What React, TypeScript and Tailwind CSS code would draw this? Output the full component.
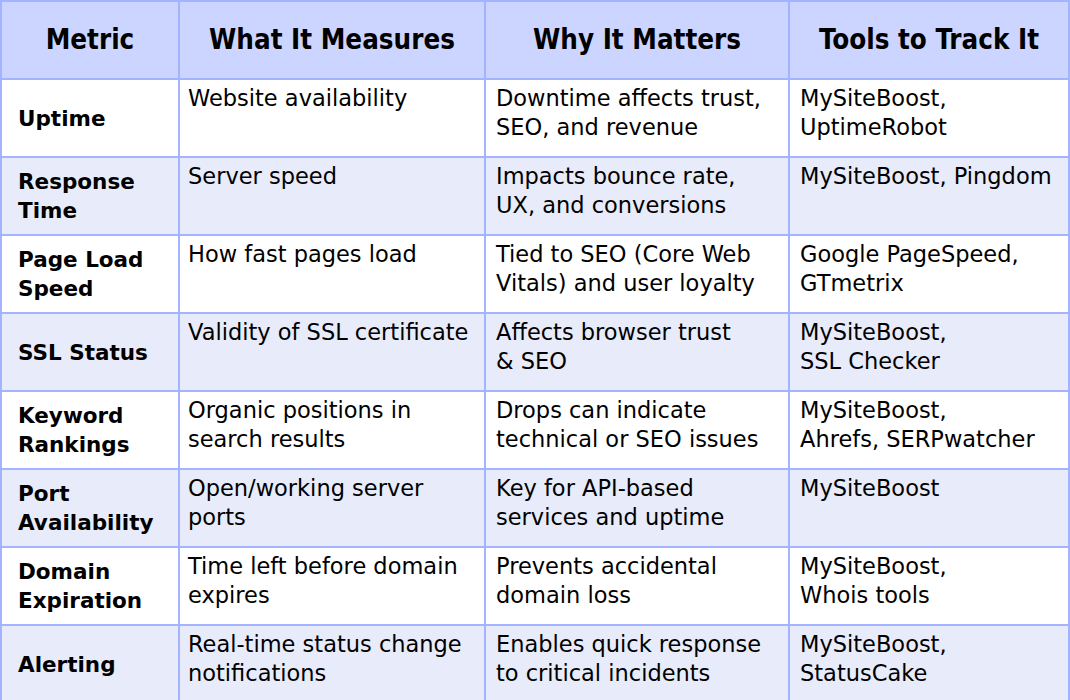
const rows = [
  { metric: ['Uptime'], measures: ['Website availability'], why: ['Downtime affects trust,', 'SEO, and revenue'], tools: ['MySiteBoost,', 'UptimeRobot'] },
  { metric: ['Response', 'Time'], measures: ['Server speed'], why: ['Impacts bounce rate,', 'UX, and conversions'], tools: ['MySiteBoost, Pingdom'] },
  { metric: ['Page Load', 'Speed'], measures: ['How fast pages load'], why: ['Tied to SEO (Core Web', 'Vitals) and user loyalty'], tools: ['Google PageSpeed,', 'GTmetrix'] },
  { metric: ['SSL Status'], measures: ['Validity of SSL certificate'], why: ['Affects browser trust', '& SEO'], tools: ['MySiteBoost,', 'SSL Checker'] },
  { metric: ['Keyword', 'Rankings'], measures: ['Organic positions in', 'search results'], why: ['Drops can indicate', 'technical or SEO issues'], tools: ['MySiteBoost,', 'Ahrefs, SERPwatcher'] },
  { metric: ['Port', 'Availability'], measures: ['Open/working server', 'ports'], why: ['Key for API-based', 'services and uptime'], tools: ['MySiteBoost'] },
  { metric: ['Domain', 'Expiration'], measures: ['Time left before domain', 'expires'], why: ['Prevents accidental', 'domain loss'], tools: ['MySiteBoost,', 'Whois tools'] },
  { metric: ['Alerting'], measures: ['Real-time status change', 'notifications'], why: ['Enables quick response', 'to critical incidents'], tools: ['MySiteBoost,', 'StatusCake'] },
];

const headers = ['Metric', 'What It Measures', 'Why It Matters', 'Tools to Track It'];

function Lines({ lines }: { lines: string[] }) {
  return (
    <>
      {lines.map((l) => (
        <div key={l} className="whitespace-nowrap">
          {l}
        </div>
      ))}
    </>
  );
}

export default function App() {
  return (
    <div className="w-[1070px] h-[700px] bg-white overflow-hidden font-['DejaVu_Sans',sans-serif]">
      <table className="w-full border-collapse table-fixed text-black">
        <colgroup>
          <col className="w-[178px]" />
          <col className="w-[306px]" />
          <col className="w-[304px]" />
          <col />
        </colgroup>
        <thead>
          <tr className="h-[78px] bg-[#ccd5ff]">
            {headers.map((h) => (
              <th
                key={h}
                className="border-2 border-[#a3b3ff] text-center align-middle text-[27.5px] font-bold font-['DejaVu_Sans_Condensed','DejaVu_Sans',sans-serif]"
              >
                {h}
              </th>
            ))}
          </tr>
        </thead>
        <tbody>
          {rows.map((r, i) => (
            <tr key={r.metric.join(' ')} className={i % 2 === 0 ? 'h-[78px] bg-white' : 'h-[78px] bg-[#e8ebfa]'}>
              <td className="border-2 border-[#a3b3ff] pl-[16px] pr-1 align-middle text-[21.5px] font-bold leading-[29px]">
                <Lines lines={r.metric} />
              </td>
              <td className="border-2 border-[#a3b3ff] pl-[8px] pr-1 pt-[4px] pb-2 align-top text-[22.5px] leading-[29px]">
                <Lines lines={r.measures} />
              </td>
              <td className="border-2 border-[#a3b3ff] pl-[10px] pr-1 pt-[4px] pb-2 align-top text-[22.5px] leading-[29px]">
                <Lines lines={r.why} />
              </td>
              <td className="border-2 border-[#a3b3ff] pl-[10px] pr-1 pt-[4px] pb-2 align-top text-[22.5px] leading-[29px]">
                <Lines lines={r.tools} />
              </td>
            </tr>
          ))}
        </tbody>
      </table>
    </div>
  );
}
